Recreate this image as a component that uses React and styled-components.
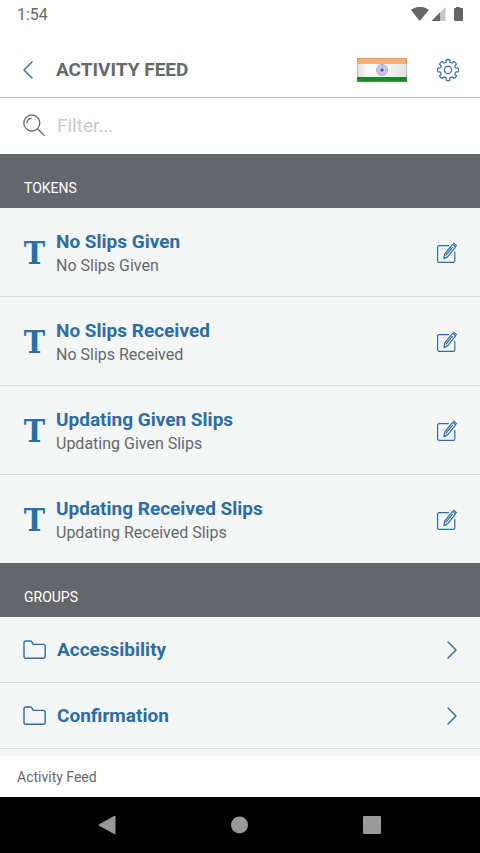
import { useState } from "react";
import styled, { createGlobalStyle } from "styled-components";

const tokens = [
  "No Slips Given",
  "No Slips Received",
  "Updating Given Slips",
  "Updating Received Slips",
];

const groups = ["Accessibility", "Confirmation"];

export default function App() {
  const [filter, setFilter] = useState("");
  const matches = (name) => name.toLowerCase().includes(filter.toLowerCase());

  return (
    <>
      <GlobalStyle />
      <Screen>
        <StatusBar>
          <span>1:54</span>
          <StatusIcons />
        </StatusBar>

        <Header>
          <IconButton aria-label="Back">
            <Chevron direction="left" />
          </IconButton>
          <PageTitle>ACTIVITY FEED</PageTitle>
          <FlagButton aria-label="Language">
            <Flag />
          </FlagButton>
          <IconButton aria-label="Settings">
            <Gear />
          </IconButton>
        </Header>

        <FilterBar>
          <SearchIcon />
          <FilterInput
            type="text"
            aria-label="Filter"
            placeholder="Filter..."
            value={filter}
            onChange={(e) => setFilter(e.target.value)}
          />
        </FilterBar>

        <Content>
          <SectionTitle>TOKENS</SectionTitle>
          <List>
            {tokens.filter(matches).map((name) => (
              <TokenRow key={name}>
                <TokenMark aria-hidden="true">T</TokenMark>
                <TokenText>
                  <RowTitle>{name}</RowTitle>
                  <RowDetail>{name}</RowDetail>
                </TokenText>
                <IconButton aria-label={`Edit ${name}`}>
                  <EditIcon />
                </IconButton>
              </TokenRow>
            ))}
          </List>

          <SectionTitle>GROUPS</SectionTitle>
          <List>
            {groups.filter(matches).map((name) => (
              <li key={name}>
                <GroupButton>
                  <FolderIcon />
                  <RowTitle>{name}</RowTitle>
                  <Chevron direction="right" />
                </GroupButton>
              </li>
            ))}
          </List>
        </Content>

        <Breadcrumb>Activity Feed</Breadcrumb>

        <SystemNav>
          <NavButton aria-label="System back">
            <svg width="20" height="20" viewBox="0 0 20 20">
              <path d="M17 1v18L.8 10z" stroke="#999" strokeLinejoin="round" />
            </svg>
          </NavButton>
          <NavButton aria-label="Home">
            <svg width="20" height="20" viewBox="0 0 20 20">
              <circle cx="9.5" cy="10" r="8.5" />
            </svg>
          </NavButton>
          <NavButton aria-label="Recent apps">
            <svg width="20" height="20" viewBox="0 0 20 20">
              <rect x="1" y="1" width="18" height="18" rx="1" />
            </svg>
          </NavButton>
        </SystemNav>
      </Screen>
    </>
  );
}

function StatusIcons() {
  return (
    <svg width="54" height="16" viewBox="0 0 54 16" fill="#666" aria-hidden="true">
      <path d="M.8 3C6-1.2 14-1.2 18.8 3L9.8 14z" />
      <path d="M35.5 0v14H21.5z" fill="#c4c4c4" />
      <path d="M30 5.5V14h-8.5z" />
      <path d="M46 1V0h4v1h2q1 0 1 1v11q0 1-1 1h-7q-1 0-1-1V2q0-1 1-1z" />
    </svg>
  );
}

function Chevron({ direction }) {
  return (
    <Icon width="12" height="18" viewBox="0 0 12 18" strokeWidth="1.4">
      <path d={direction === "left" ? "M10 1L2 9l8 8" : "M2 1l8 8-8 8"} />
    </Icon>
  );
}

function Flag() {
  return (
    <svg width="52" height="26" viewBox="0 0 52 26">
      <defs>
        <linearGradient id="cloth" x1="0" x2="1">
          <stop offset="0" stopColor="#dedede" />
          <stop offset=".2" stopColor="#fafafa" />
          <stop offset=".55" stopColor="#f6f6f6" />
          <stop offset="1" stopColor="#e2e2e2" />
        </linearGradient>
      </defs>
      <rect x="1" y="1" width="50" height="24" fill="url(#cloth)" />
      <rect x="1" y="1" width="50" height="6" fill="#fbb073" />
      <rect x="1" y="20" width="50" height="4" fill="#16881f" />
      <path d="M1 24.5h50" stroke="#4c8c4b" />
      <path d="M1.5 1v23M50.5 1v23" stroke="#8b735f" strokeOpacity=".35" />
      <path d="M1 1.5h50" stroke="#c98c60" strokeOpacity=".5" />
      <circle cx="26" cy="13" r="5.5" fill="#cfcee9" stroke="#aaaad6" />
      <circle cx="26" cy="13" r="3.6" fill="none" stroke="#9a9acf" strokeDasharray="1 .9" />
      <circle cx="26" cy="13" r="1.7" fill="#5452ad" />
    </svg>
  );
}

// Eight teeth, each one an eighth of a turn from the last
function gearPath(center) {
  const corners = [
    [8.2, -12],
    [10.3, -11],
    [10.6, 0],
    [10.3, 11],
    [8.2, 12],
    [7.8, 22.5],
  ];
  const points = [];
  for (let tooth = 0; tooth < 8; tooth++) {
    corners.forEach(([radius, offset]) => {
      const angle = ((tooth * 45 + offset) * Math.PI) / 180;
      const x = center + radius * Math.cos(angle);
      const y = center + radius * Math.sin(angle);
      points.push(`${x.toFixed(2)} ${y.toFixed(2)}`);
    });
  }
  return `M${points.join("L")}Z`;
}

function Gear() {
  return (
    <Icon width="24" height="24" viewBox="0 0 24 24" strokeWidth="1.1">
      <path d={gearPath(12)} />
      <circle cx="12" cy="12" r="3.6" />
    </Icon>
  );
}

function SearchIcon() {
  return (
    <Icon width="24" height="24" viewBox="0 0 24 24" strokeWidth="1.3" $color="#66686b">
      <circle cx="8.8" cy="9" r="8" />
      <path d="M14.6 14.8l6.6 6.6M4 8.7a4.8 4.8 0 0 1 4.2-4.4" />
    </Icon>
  );
}

function EditIcon() {
  return (
    <Icon width="22" height="22" viewBox="0 0.6 22 22" strokeWidth="1.2">
      <path d="M12.5 4.3H3.2Q1.6 4.3 1.6 5.9v13.4Q1.6 20.9 3.2 20.9h14Q18.8 20.9 18.8 19.3V11" />
      <path d="M8 17.2l.6-4.4 8-9.8 3 2.4-7.8 9.8zM17.6 1.8l3 2.4M10 13.8l6.4-7.8" />
    </Icon>
  );
}

function FolderIcon() {
  return (
    <Icon width="24" height="20" viewBox="0 0 24 20" strokeWidth="1.4">
      <path d="M1 3Q1 1 3 1h4.4q1.3 0 1.7 1.2l.5 1.4q.3.8 1.2.8h9.4q2 0 2 2V16.2q0 2-2 2H3q-2 0-2-2z" />
    </Icon>
  );
}

const GlobalStyle = createGlobalStyle`
  * {
    box-sizing: border-box;
  }

  body {
    margin: 0;
    background: #fff;
    color: #66686b;
    font-family: Roboto, "Liberation Sans", sans-serif;
  }

  button {
    padding: 0;
    border: 0;
    background: none;
    font: inherit;
    cursor: pointer;
  }

  svg {
    display: block;
    flex-shrink: 0;
  }
`;

const Screen = styled.div`
  display: flex;
  flex-direction: column;
  height: 100vh;
`;

const StatusBar = styled.div`
  display: flex;
  align-items: center;
  justify-content: space-between;
  padding: 6px 16px 6px 17px;
  font-size: 16px;
  line-height: 18px;
`;

const Header = styled.header`
  display: flex;
  align-items: center;
  height: 68px;
  padding: 12px 20px 0 22px;
  border-bottom: 1px solid #bfc0c1;
`;

const PageTitle = styled.h1`
  flex: 1;
  margin: 0 0 0 22px;
  font-size: 19px;
  font-weight: 700;
  line-height: 24px;
`;

const Icon = styled.svg`
  fill: none;
  stroke: ${({ $color }) => $color || "#2b6da5"};
  stroke-linecap: round;
  stroke-linejoin: round;
`;

const IconButton = styled.button`
  display: flex;
`;

const FlagButton = styled(IconButton)`
  margin-right: 28px;
`;

const FilterBar = styled.div`
  display: flex;
  align-items: center;
  gap: 10px;
  height: 56px;
  padding: 0 23px;
`;

const FilterInput = styled.input`
  flex: 1;
  min-width: 0;
  padding: 0;
  border: 0;
  outline: 0;
  background: none;
  color: #66686b;
  font-family: inherit;
  font-size: 19px;
  line-height: 24px;

  &::placeholder {
    color: #c8c8c8;
    opacity: 1;
  }
`;

const Content = styled.main`
  flex: 1;
  min-height: 0;
  overflow: hidden auto;
  background: #f4f6f6;
`;

const SectionTitle = styled.h2`
  margin: 0;
  padding: 25px 24px 11px;
  background: #63666a;
  color: #fff;
  font-size: 14px;
  font-weight: 400;
  line-height: 18px;
`;

const List = styled.ul`
  margin: 0;
  padding: 0;
  list-style: none;
`;

const TokenRow = styled.li`
  display: flex;
  align-items: center;
  padding: 21px 22px 19px 23px;
  border-bottom: 1px solid #d7dada;

  &:last-child {
    border-bottom: 0;
  }
`;

const TokenMark = styled.span`
  width: 23px;
  color: #2b6da5;
  font-family: "DejaVu Serif Condensed", "DejaVu Serif", serif;
  font-size: 32px;
  font-weight: 700;
  line-height: 40px;
  text-align: center;
`;

const TokenText = styled.div`
  flex: 1;
  margin-left: 10px;
`;

const RowTitle = styled.span`
  display: block;
  color: #2b6da5;
  font-size: 19px;
  font-weight: 700;
  line-height: 26px;
`;

const RowDetail = styled.span`
  display: block;
  font-size: 16px;
  line-height: 22px;
`;

const GroupButton = styled.button`
  display: flex;
  align-items: center;
  gap: 10px;
  width: 100%;
  height: 66px;
  padding: 1px 22px 0 23px;
  border-bottom: 1px solid #d7dada;
  text-align: left;

  ${RowTitle} {
    flex: 1;
  }
`;

const Breadcrumb = styled.footer`
  padding: 12px 17px 11px;
  background: #fff;
  font-size: 14px;
  line-height: 18px;
`;

const SystemNav = styled.nav`
  display: flex;
  align-items: center;
  justify-content: space-evenly;
  height: 56px;
  background: #000;
`;

const NavButton = styled.button`
  display: grid;
  place-items: center;
  width: 48px;
  height: 48px;
  fill: #999;
`;
